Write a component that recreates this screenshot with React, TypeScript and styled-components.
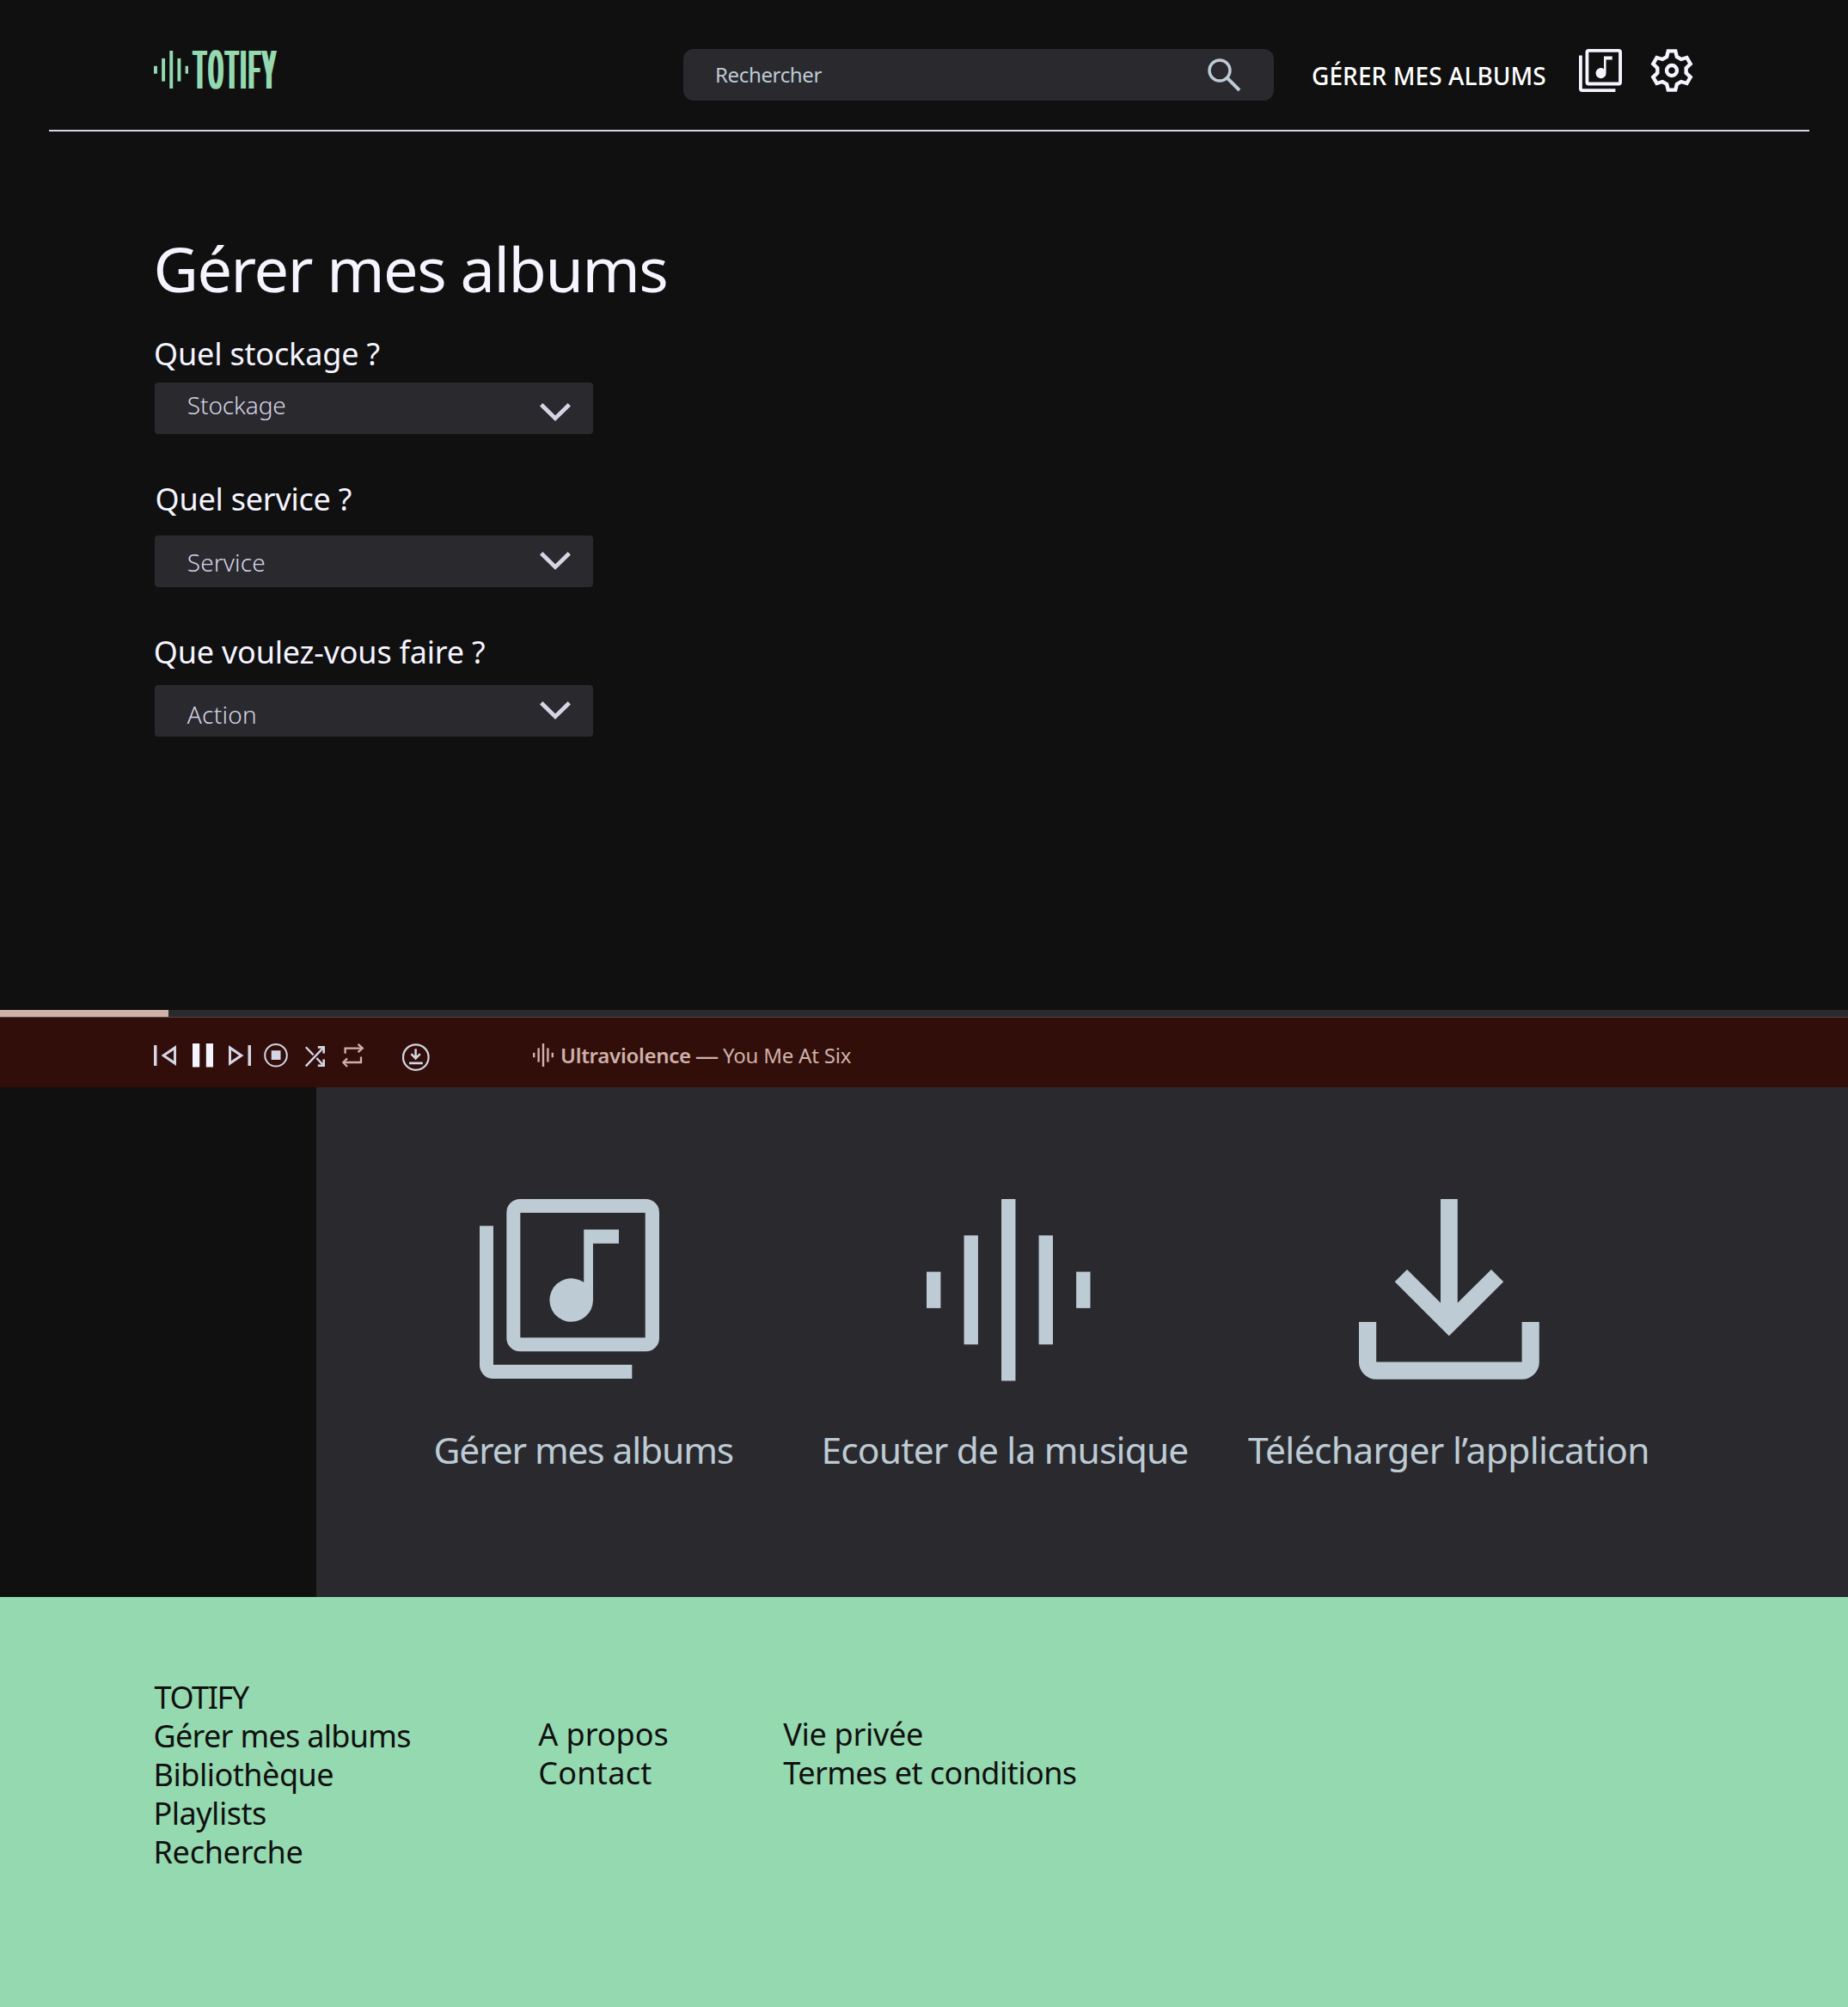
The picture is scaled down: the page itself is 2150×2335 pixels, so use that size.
import React from 'react';
import styled, { createGlobalStyle } from 'styled-components';

const color = {
  bg: '#101010',
  panel: '#2a292e',
  green: '#95d9b0',
  white: '#f5f4ff',
  mist: '#bdcbd4',
  lavender: '#d5d5e5',
  wine: '#310e0a',
  rose: '#cfb1a9',
};

const GlobalStyle = createGlobalStyle`
  *, *::before, *::after { box-sizing: border-box; }
  body {
    margin: 0;
    background: ${color.bg};
    font-family: "Noto Sans", "Open Sans", sans-serif;
    font-kerning: normal;
  }
  svg { display: block; flex: none; }
`;

const Page = styled.div`
  width: 2150px;
  height: 2335px;
  display: flex;
  flex-direction: column;
  background: ${color.bg};
  overflow: hidden;
`;

const Text = styled.span<{ $track?: number }>`
  letter-spacing: ${p => p.$track ?? 0}px;
  white-space: nowrap;
`;

/* Header */
const Header = styled.header`
  height: 151px;
  flex: none;
  display: flex;
  align-items: flex-start;
  padding: 52px 0 0 178.5px;
`;

const Logo = styled.a`
  display: flex;
  width: 616.5px;
  padding-top: 6.5px;
  color: ${color.green};
`;

const Wordmark = styled.span`
  margin-left: 4.5px;
  width: 100px;
  height: 46px;
  line-height: 46px;
  font-family: Roboto, sans-serif;
  font-size: 61px;
  font-weight: 400;
  font-kerning: none;
  letter-spacing: 7.2px;
  white-space: nowrap;
  transform: scaleX(0.4);
  transform-origin: 0 50%;
  text-indent: 3px;
  text-shadow: -4.6px 0 currentColor, -2.3px 0 currentColor, 2.3px 0 currentColor, 4.6px 0 currentColor;
`;

const SearchBox = styled.div`
  margin-top: 5px;
  width: 686.5px;
  height: 60px;
  padding: 0 38px 0 37px;
  display: flex;
  align-items: center;
  justify-content: space-between;
  border-radius: 12px;
  background: ${color.panel};
  color: ${color.mist};
  font-size: 24px;
  line-height: 60px;
`;

const NavLink = styled.a`
  margin: 5.5px 0 0 44.5px;
  width: 306px;
  color: #fff;
  font-size: 28px;
  font-weight: 500;
  line-height: 60px;
`;

const NavIcons = styled.div`
  display: flex;
  gap: 23.5px;
  margin-left: -0.5px;
  color: ${color.white};
`;

const Divider = styled.hr`
  flex: none;
  width: 2048px;
  height: 2px;
  margin: 0 0 0 57px;
  border: 0;
  background: ${color.lavender};
`;

/* Form */
const Main = styled.main`
  height: 1022px;
  flex: none;
  padding: 114px 0 0 178px;
  color: ${color.white};
`;

const Title = styled.h1`
  margin: 0 0 30px;
  padding-left: 0.5px;
  font-size: 72px;
  font-weight: 400;
  line-height: 90px;
`;

const Field = styled.div<{ $gap: number; $after: number }>`
  display: flex;
  flex-direction: column;
  gap: ${p => p.$gap}px;
  margin-bottom: ${p => p.$after}px;
`;

const Label = styled.label<{ $indent: number }>`
  padding-left: ${p => p.$indent}px;
  font-size: 36px;
  line-height: 50px;
`;

const Select = styled.div`
  margin-left: 2.3px;
  width: 510px;
  height: 59.5px;
  padding: 0 26.5px 0 37.5px;
  display: flex;
  align-items: flex-start;
  justify-content: space-between;
  border-radius: 4px;
  background: ${color.panel};
  color: ${color.lavender};
`;

const SelectValue = styled.span<{ $top: number; $track: number }>`
  margin-top: ${p => p.$top}px;
  font-size: 28px;
  font-weight: 300;
  line-height: 40px;
  letter-spacing: ${p => p.$track}px;
`;

const ChevronBox = styled.span<{ $top: number }>`
  margin-top: ${p => p.$top}px;
`;

/* Player */
const Progress = styled.div`
  height: 8px;
  flex: none;
  background: ${color.panel};
`;

const ProgressFill = styled.div`
  width: 196px;
  height: 8px;
  background: ${color.rose};
`;

const Player = styled.section`
  height: 82.4px;
  flex: none;
  display: flex;
  align-items: flex-start;
  padding: 30px 0 0 179px;
  border-top: 1px solid #50443f;
  background: ${color.wine};
  color: ${color.lavender};
`;

const Control = styled.span<{ $before?: number; $tint?: string }>`
  margin-left: ${p => p.$before ?? 0}px;
  color: ${p => p.$tint ?? 'inherit'};
`;

const Track = styled.p`
  margin: 0 0 0 8px;
  display: flex;
  font-size: 24px;
  line-height: 28px;
  color: ${color.rose};
`;

const Song = styled.strong`
  width: 152px;
  font-weight: 600;
  letter-spacing: -0.28px;
`;

const Dash = styled.span`
  width: 37px;
  font-size: 27.5px;
  text-align: center;
`;

/* Shortcuts */
const Lower = styled.section`
  height: 593px;
  flex: none;
  display: flex;
`;

const Gutter = styled.div`
  width: 368px;
`;

const Shortcuts = styled.div`
  flex: 1;
  display: grid;
  grid-template-columns: 451px 496.5px auto;
  padding: 129.8px 0 0 136.5px;
  background: ${color.panel};
  color: ${color.mist};
`;

const Shortcut = styled.a`
  display: flex;
  flex-direction: column;
  gap: 50px;
  font-size: 42.5px;
  line-height: 60px;
`;

const ShortcutIcon = styled.span<{ $indent: number }>`
  height: 212px;
  margin-left: ${p => p.$indent}px;
`;

/* Footer */
const Footer = styled.footer`
  flex: 1;
  display: flex;
  align-items: flex-start;
  padding: 93.6px 0 0 178.5px;
  background: ${color.green};
  color: ${color.bg};
  font-size: 36px;
  line-height: 45px;
`;

const FooterColumn = styled.nav<{ $width: number; $top?: number }>`
  display: flex;
  flex-direction: column;
  width: ${p => p.$width}px;
  padding-top: ${p => p.$top ?? 0}px;
`;

const FooterBrand = styled(Text)`
  padding-left: 1px;
`;

type WaveProps = { width: number; height: number; bar: number };

const Wave = ({ width, height, bar }: WaveProps) => {
  const pitch = (width - bar) / 4;
  const share = [0.2, 0.6, 1, 0.6, 0.2];
  return (
    <svg width={width} height={height} fill="currentColor">
      {share.map((s, i) => (
        <rect key={i} x={i * pitch} y={(height * (1 - s)) / 2} width={bar} height={height * s} />
      ))}
    </svg>
  );
};

const SearchGlyph = () => (
  <svg width="39" height="39" viewBox="0 0 39 39" fill="none" stroke="currentColor">
    <circle cx="14" cy="14" r="12" strokeWidth="3.4" />
    <path d="M22.4 22.4L37 37" strokeWidth="4" />
  </svg>
);

const Library = ({ size, box = '0 0 24 24' }: { size: number; box?: string }) => (
  <svg width={size} height={size} viewBox={box} fill="currentColor">
    <path
      fillRule="evenodd"
      d="M6.5 2H20.5A1.5 1.5 0 0 1 22 3.5V17.47A1.5 1.5 0 0 1 20.5 18.97H6.5A1.5 1.5 0 0 1 5 17.47V3.5A1.5 1.5 0 0 1 6.5 2ZM6.53 3.53V17.44H20.44V3.53Z"
    />
    <path d="M2 4.98H3.53V20.45H18.97V22H3.5A1.5 1.5 0 0 1 2 20.5Z" />
    <path d="M13.6 5.4H17.5V6.96H14.63V13.22A2.42 2.42 0 1 1 13.6 11.27Z" />
  </svg>
);

const Gear = () => (
  <svg width="60" height="60" viewBox="-12 -12 24 24" fill="none" stroke="currentColor">
    <path
      strokeWidth="1.75"
      d={
        'M' +
        [0, 1, 2, 3, 4, 5]
          .flatMap(k => {
            const a = (k * Math.PI) / 3;
            return [[-2.35, -6.35], [-1.7, -9.05], [1.7, -9.05], [2.35, -6.35]].map(
              ([x, y]) => `${(x * Math.cos(a) - y * Math.sin(a)).toFixed(2)} ${(x * Math.sin(a) + y * Math.cos(a)).toFixed(2)}`
            );
          })
          .join('L') +
        'Z'
      }
    />
    <circle r="2.4" strokeWidth="1.75" />
  </svg>
);

const Chevron = () => (
  <svg width="36" height="22" fill="none" stroke="currentColor" strokeWidth="4.8">
    <path d="M1.7 1.7L18 17.6L34.3 1.7" />
  </svg>
);

const Previous = () => (
  <svg width="26" height="28" fill="none" stroke="currentColor">
    <path d="M1.75 2V26" strokeWidth="3.5" />
    <path d="M24.5 4.9V23.1L11.2 14Z" strokeWidth="3" />
  </svg>
);

const Next = () => (
  <svg width="26" height="28" fill="none" stroke="currentColor">
    <path d="M24.25 2V26" strokeWidth="3.5" />
    <path d="M1.5 4.9V23.1L14.8 14Z" strokeWidth="3" />
  </svg>
);

const Pause = () => (
  <svg width="24" height="28" fill={color.white}>
    <rect width="8.2" height="27.5" />
    <rect x="15.8" width="8.2" height="27.5" />
  </svg>
);

const Stop = () => (
  <svg width="28" height="28" fill="none" stroke="currentColor" strokeWidth="2">
    <circle cx="14" cy="13.8" r="12.8" />
    <rect x="8.7" y="8.2" width="10.8" height="10.8" fill="currentColor" stroke="none" />
  </svg>
);

const Shuffle = () => (
  <svg width="23" height="28" fill="none" stroke="currentColor" strokeWidth="2.3">
    <path d="M0.8 26.4L20.5 5.6M0.8 4.2L9.6 13.4M13.4 17L20.5 24.6" />
    <path d="M14.8 4.4H21.7V11.6M14.8 25.8H21.7V18.6" strokeWidth="2.6" />
  </svg>
);

const Repeat = () => (
  <svg width="26" height="28" fill="none" stroke="currentColor" strokeWidth="2.3">
    <path d="M3.6 11.8V5.6H23.5M22 15.4V22H1.8" />
    <path d="M18.6 0.8L23.8 5.6L18.6 10.2M6 17.4L1.3 22L6 27" />
  </svg>
);

const DownloadCircle = () => (
  <svg width="32" height="33" fill="none" stroke="currentColor">
    <circle cx="15.8" cy="16.1" r="14.8" strokeWidth="2.2" />
    <path d="M15.6 6.2V17.6M10.4 12.2L15.6 17.4L20.8 12.2" strokeWidth="2.5" />
    <path d="M8 22.9H23.8" strokeWidth="2.7" />
  </svg>
);

const Download = () => (
  <svg width="210" height="212" fill="currentColor">
    <path d="M95 0H114.8V120.7L154 82L168.2 96.3L104.8 159.3L41.7 96.3L56 82L95 120.7Z" />
    <path d="M0 143H20.2V189.5H189.6V143H209.8V189.7A20 20 0 0 1 189.8 209.7H20A20 20 0 0 1 0 189.7Z" />
  </svg>
);

type FieldItem = {
  label: string; indent: number; track: number; gap: number; after: number;
  value: string; valueTop: number; valueTrack: number; chevronTop: number;
};

const fields: FieldItem[] = [
  { label: 'Quel stockage ?', indent: 1, track: -0.17, gap: 8.4, after: 51.6, value: 'Stockage', valueTop: 5.9, valueTrack: -0.1, chevronTop: 23.9 },
  { label: 'Quel service ?', indent: 2.5, track: -0.23, gap: 16.6, after: 51.6, value: 'Service', valueTop: 10.9, valueTrack: 0.1, chevronTop: 19.4 },
  { label: 'Que voulez-vous faire ?', indent: 0.8, track: -0.2, gap: 13, after: 0, value: 'Action', valueTop: 13.6, valueTrack: 0.25, chevronTop: 19.3 },
];

export default function App() {
  return (
    <Page>
      <GlobalStyle />
      <Header>
        <Logo>
          <Wave width={40.5} height={44.5} bar={3.9} />
          <Wordmark>TOTIFY</Wordmark>
        </Logo>
        <SearchBox>
          <Text $track={-0.35}>Rechercher</Text>
          <SearchGlyph />
        </SearchBox>
        <NavLink><Text $track={0.08}>GÉRER MES ALBUMS</Text></NavLink>
        <NavIcons>
          <Library size={60} />
          <Gear />
        </NavIcons>
      </Header>
      <Divider />

      <Main>
        <Title><Text $track={-1.45}>Gérer mes albums</Text></Title>
        {fields.map(f => (
          <Field key={f.value} $gap={f.gap} $after={f.after}>
            <Label $indent={f.indent}><Text $track={f.track}>{f.label}</Text></Label>
            <Select>
              <SelectValue $top={f.valueTop} $track={f.valueTrack}>{f.value}</SelectValue>
              <ChevronBox $top={f.chevronTop}><Chevron /></ChevronBox>
            </Select>
          </Field>
        ))}
      </Main>

      <Progress><ProgressFill /></Progress>
      <Player>
        <Control><Previous /></Control>
        <Control $before={19}><Pause /></Control>
        <Control $before={18}><Next /></Control>
        <Control $before={15}><Stop /></Control>
        <Control $before={20}><Shuffle /></Control>
        <Control $before={20} $tint={color.rose}><Repeat /></Control>
        <Control $before={44}><DownloadCircle /></Control>
        <Control $before={120} $tint={color.rose}><Wave width={24} height={27} bar={2.4} /></Control>
        <Track>
          <Song>Ultraviolence</Song>
          <Dash>—</Dash>
          <Text $track={-0.2}>You Me At Six</Text>
        </Track>
      </Player>

      <Lower>
        <Gutter />
        <Shortcuts>
          <Shortcut>
            <ShortcutIcon $indent={53}><Library size={209} box="2 2 20 20" /></ShortcutIcon>
            <Text $track={-1.13}>Gérer mes albums</Text>
          </Shortcut>
          <Shortcut>
            <ShortcutIcon $indent={122.7}><Wave width={190.5} height={211.5} bar={16.4} /></ShortcutIcon>
            <Text $track={-0.84}>Ecouter de la musique</Text>
          </Shortcut>
          <Shortcut>
            <ShortcutIcon $indent={128.8}><Download /></ShortcutIcon>
            <Text $track={-0.65}>Télécharger l’application</Text>
          </Shortcut>
        </Shortcuts>
      </Lower>

      <Footer>
        <FooterColumn $width={447.7}>
          <FooterBrand $track={-1.4}>TOTIFY</FooterBrand>
          <Text $track={-0.71}>Gérer mes albums</Text>
          <Text $track={-0.48}>Bibliothèque</Text>
          <Text $track={-0.5}>Playlists</Text>
          <Text $track={-0.28}>Recherche</Text>
        </FooterColumn>
        <FooterColumn $width={285} $top={43}>
          <Text>A propos</Text>
          <Text $track={0.3}>Contact</Text>
        </FooterColumn>
        <FooterColumn $width={400} $top={43}>
          <Text $track={-0.3}>Vie privée</Text>
          <Text $track={-0.54}>Termes et conditions</Text>
        </FooterColumn>
      </Footer>
    </Page>
  );
}
